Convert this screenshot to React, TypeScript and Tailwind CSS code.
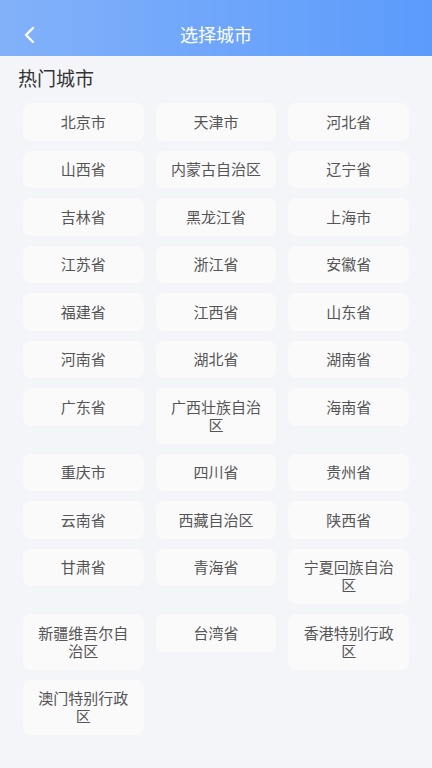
import React from "react";

const cities = [
  "北京市","天津市","河北省","山西省","内蒙古自治区","辽宁省","吉林省","黑龙江省","上海市",
  "江苏省","浙江省","安徽省","福建省","江西省","山东省","河南省","湖北省","湖南省",
  "广东省","广西壮族自治区","海南省","重庆市","四川省","贵州省","云南省","西藏自治区","陕西省",
  "甘肃省","青海省","宁夏回族自治区","新疆维吾尔自治区","台湾省","香港特别行政区","澳门特别行政区",
];

export default function App() {
  return (
    <div
      className="min-h-[768px] bg-[#f4f5f9]"
      style={{ fontFamily: '"Noto Sans CJK SC", "Noto Sans", sans-serif' }}
    >
      <div className="relative flex h-[56px] items-center justify-center bg-gradient-to-r from-[#82b1f9] to-[#5b9bfc]">
        <svg
          className="absolute left-[22px] top-[26px]"
          width="16"
          height="18"
          viewBox="0 0 16 18"
          fill="none"
          stroke="white"
          strokeWidth="2.4"
          strokeLinecap="round"
          strokeLinejoin="round"
        >
          <path d="M11 2 L4 9 L11 16" />
        </svg>
        <span className="mt-[12px] text-[18px] leading-none text-white">选择城市</span>
      </div>
      <div className="px-[18px] pt-[10px] text-[19px] leading-[24px] text-[#333]">热门城市</div>
      <div className="grid grid-cols-3 items-start gap-x-[12px] gap-y-[10px] px-[23px] pt-[13px] pb-6">
        {cities.map((c) => (
          <div
            key={c}
            className="rounded-[8px] bg-[#fafafb] px-[13px] py-[9.75px] text-center text-[15px] leading-[18px] text-[#555]"
          >
            {c}
          </div>
        ))}
      </div>
    </div>
  );
}
